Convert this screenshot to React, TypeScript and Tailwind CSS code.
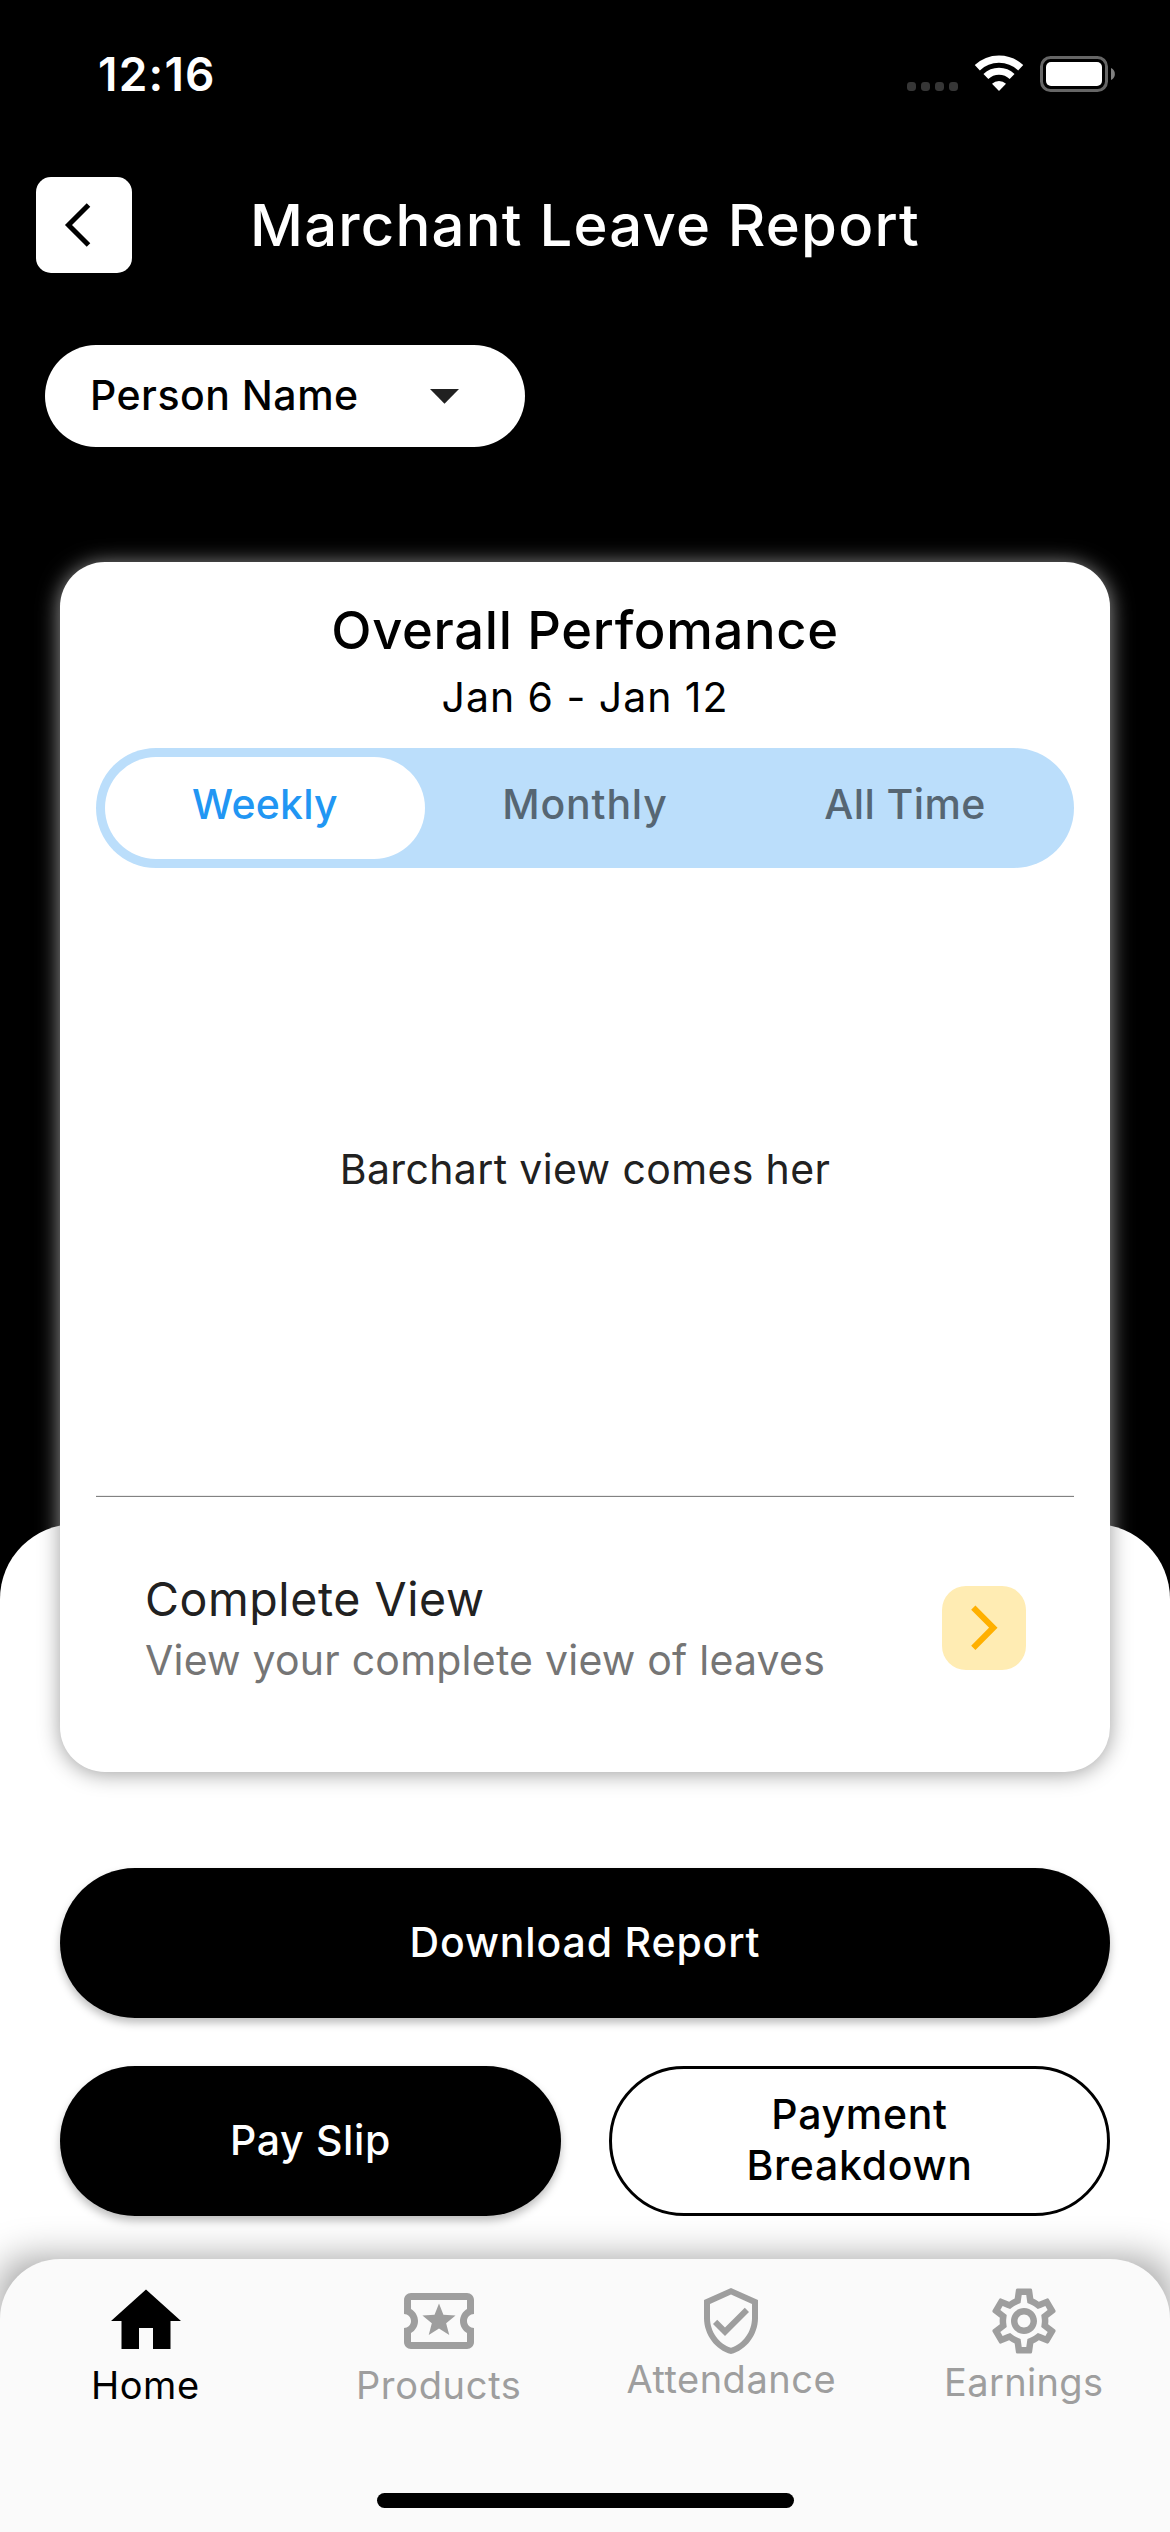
import type { ComponentType } from "react";
import {
  MdOutlineLocalActivity,
  MdOutlineVerifiedUser,
  MdOutlineSettings,
} from "react-icons/md";

type IconProps = { className?: string };

function HomeIcon({ className }: IconProps) {
  return (
    <svg viewBox="0 0 24 24" fill="currentColor" className={className}>
      <path d="M10 20v-6h4v6h5v-8h3L12 3 2 12h3v8z" />
    </svg>
  );
}

function StatusIcons() {
  return (
    <svg width="210" height="39" viewBox="906 55 210 39">
      {[907, 921, 935, 949].map((x) => (
        <rect key={x} x={x} y="82" width="9" height="9" rx="3.4" fill="#363636" />
      ))}
      <g fill="none" stroke="#fff">
        <path d="M977.3 67.8 A31.5 31.5 0 0 1 1020.7 67.8" strokeWidth="7.4" />
        <path d="M985.9 76.6 A18.8 18.8 0 0 1 1012.1 76.6" strokeWidth="7" />
      </g>
      <path d="M999 91 L992 83.8 A10 10 0 0 1 1006 83.8 Z" fill="#fff" />
      <rect x="1041.5" y="57.5" width="65" height="33" rx="9" fill="none" stroke="#666" strokeWidth="3" />
      <rect x="1046" y="62" width="56" height="24" rx="5" fill="#fff" />
      <path d="M1111 68 A6.6 6.6 0 0 1 1111 80 Z" fill="#808080" />
    </svg>
  );
}

type NavItem = {
  label: string;
  Icon: ComponentType<IconProps>;
  item: string;
  icon: string;
  text: string;
};

const NAV: NavItem[] = [
  {
    label: "Home",
    Icon: HomeIcon,
    item: "pt-5 text-black",
    icon: "size-[84px]",
    text: "tracking-[0.56px] -translate-x-px",
  },
  {
    label: "Products",
    Icon: MdOutlineLocalActivity,
    item: "pt-5 text-[#9e9e9e]",
    icon: "size-[84px]",
    text: "tracking-[0.68px]",
  },
  {
    label: "Attendance",
    Icon: MdOutlineVerifiedUser,
    item: "pt-[26px] text-[#9e9e9e]",
    icon: "size-[72px]",
    text: "tracking-[0.51px]",
  },
  {
    label: "Earnings",
    Icon: MdOutlineSettings,
    item: "pt-[23px] text-[#9e9e9e]",
    icon: "size-[78px]",
    text: "tracking-[0.36px]",
  },
];

export default function App() {
  return (
    <div className="relative flex h-[2532px] w-[1170px] flex-col overflow-hidden bg-black font-['Inter',sans-serif] text-[41px]">
      <div className="absolute inset-x-0 top-[1524px] bottom-0 rounded-t-[75px] bg-white" />

      <div className="flex h-[149px] shrink-0 items-center justify-between pr-[54px] pl-[98px] text-white">
        <span className="text-[46px] font-semibold tracking-[1.2px]">12:16</span>
        <StatusIcons />
      </div>

      <header className="mt-7 grid h-24 shrink-0 grid-cols-[96px_1fr_96px] items-center px-9">
        <button className="size-24 rounded-[15px] bg-white">
          <svg viewBox="0 0 96 96" className="size-full" fill="none" stroke="#000" strokeWidth="5">
            <path d="M52.5 28 L32.5 48 L52.5 68" />
          </svg>
        </button>
        <h1 className="text-center text-[58px] leading-[95px] font-medium tracking-[1.2px] whitespace-nowrap text-white">
          Marchant Leave Report
        </h1>
      </header>

      <button className="mt-[72px] ml-[45px] flex h-[102px] w-[480px] shrink-0 items-center justify-between rounded-full bg-white pr-[66px] pl-[45px]">
        <span className="font-medium tracking-[0.49px] text-black">Person Name</span>
        <svg width="29" height="15" viewBox="0 0 29 15" fill="#212121">
          <path d="M0 0h29L14.5 14.8z" />
        </svg>
      </button>

      <main className="relative mx-[60px] mt-[115px] flex h-[1210px] shrink-0 flex-col rounded-[45px] bg-white px-9 pt-[35px] shadow-[0_2px_21px_#9e9e9e]">
        <h2 className="text-center text-[52.5px] leading-[66px] font-medium tracking-[0.67px] text-black">
          Overall Perfomance
        </h2>
        <p className="text-center leading-[69px] tracking-[0.97px] text-black">Jan 6 - Jan 12</p>

        <div className="mt-4 grid h-[120px] shrink-0 grid-cols-3 rounded-full bg-[#bbdefb] p-[9px] text-center leading-[95px] font-medium text-[#566673]">
          <span className="rounded-full bg-white tracking-[0.25px] text-[#2196f3]">Weekly</span>
          <span className="tracking-[0.81px]">Monthly</span>
          <span className="tracking-[0.4px]">All Time</span>
        </div>

        <div className="flex h-[627px] shrink-0 items-center justify-center pb-[23px] tracking-[0.37px] text-[#212121]">
          Barchart view comes her
        </div>
        <div className="h-0.5 shrink-0 border-t border-[#ededed] bg-[#828282]" />

        <div className="flex justify-between pt-[72px] pr-12 pl-[49px]">
          <div>
            <div className="text-[46.5px] leading-[60px] tracking-[0.58px] text-[#212121]">Complete View</div>
            <div className="leading-[62px] tracking-[0.22px] text-[#757575]">View your complete view of leaves</div>
          </div>
          <button className="mt-[17px] size-[84px] rounded-3xl bg-[#ffecb3]">
            <svg viewBox="0 0 84 84" className="size-full" fill="none" stroke="#ffb000" strokeWidth="6">
              <path d="M31.3 21.6 L51.3 41.7 L31.3 61.8" />
            </svg>
          </button>
        </div>
      </main>

      <div className="relative mx-[60px] mt-[95.5px] grid shrink-0 grid-cols-2 gap-12 font-medium">
        <button className="col-span-2 h-[150px] rounded-full bg-black tracking-[0.85px] text-white shadow-[0_5px_8px_rgba(0,0,0,0.26)]">
          Download Report
        </button>
        <button className="h-[150px] rounded-full bg-black tracking-[0.65px] text-white shadow-[0_5px_8px_rgba(0,0,0,0.26)]">
          Pay Slip
        </button>
        <button className="h-[150px] rounded-full border-[3px] border-black bg-white px-16 pb-0.5 leading-[51px] tracking-[0.7px] text-black">
          Payment Breakdown
        </button>
      </div>

      <footer className="relative mt-[43.5px] h-[273px] shrink-0">
        <div className="absolute inset-0 rounded-[30px] bg-black/[0.38] blur-[19px]" />
        <nav className="relative grid h-full grid-cols-4 rounded-t-[60px] bg-[#fafafa]">
          {NAV.map(({ label, Icon, item, icon, text }) => (
            <a key={label} className={`flex flex-col items-center ${item}`}>
              <Icon className={icon} />
              <span className={`text-[38px] leading-[45px] ${text}`}>{label}</span>
            </a>
          ))}
        </nav>
        <div className="absolute bottom-6 left-[377px] h-[15px] w-[417px] rounded-full bg-black" />
      </footer>
    </div>
  );
}
